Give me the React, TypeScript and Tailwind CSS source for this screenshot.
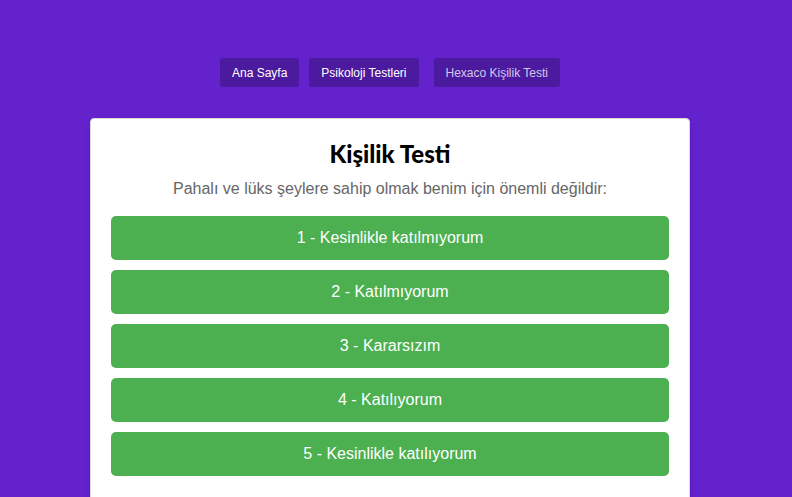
const navLinks = [
  { label: "Ana Sayfa", muted: false },
  { label: "Psikoloji Testleri", muted: false },
  { label: "Hexaco Kişilik Testi", muted: true },
];

const answers = [
  "1 - Kesinlikle katılmıyorum",
  "2 - Katılmıyorum",
  "3 - Kararsızım",
  "4 - Katılıyorum",
  "5 - Kesinlikle katılıyorum",
];

export default function App() {
  return (
    <main className="min-h-screen bg-[#6322cc] pr-3 font-['Liberation_Sans',Arial,sans-serif]">
      <nav className="flex justify-center pt-[58px]">
        {navLinks.map((link, i) => (
          <a
            key={link.label}
            href="#"
            className={
              link.muted
                ? "ml-[15px] flex h-[29px] items-center rounded-[3px] bg-[#4b1a9e] px-3 text-[12px] text-[#d4c8ea]"
                : i === 0
                  ? "flex h-[29px] items-center rounded-[3px] bg-[#4b1a9e] px-3 text-[12px] text-white"
                  : "ml-[10px] flex h-[29px] items-center rounded-[3px] bg-[#4b1a9e] px-3 text-[12px] text-white"
            }
          >
            {link.label}
          </a>
        ))}
      </nav>

      <section className="mx-auto mt-[31px] w-[600px] rounded-[4px] border border-[#d8d8d8] bg-white px-5 pt-[20px] pb-6 shadow-md">
        <h1 className="text-center font-['Lato',sans-serif] text-[24px] font-black leading-[30px] text-black">
          Kişilik Testi
        </h1>
        <p className="mt-[10px] text-center text-[16px] leading-[20px] text-[#666666]">
          Pahalı ve lüks şeylere sahip olmak benim için önemli değildir:
        </p>

        <div className="mt-[17px] flex flex-col gap-[10px]">
          {answers.map((answer) => (
            <button
              key={answer}
              className="h-[44px] w-full rounded-[5px] bg-[#4caf50] text-[16px] text-white"
            >
              {answer}
            </button>
          ))}
        </div>
      </section>
    </main>
  );
}
